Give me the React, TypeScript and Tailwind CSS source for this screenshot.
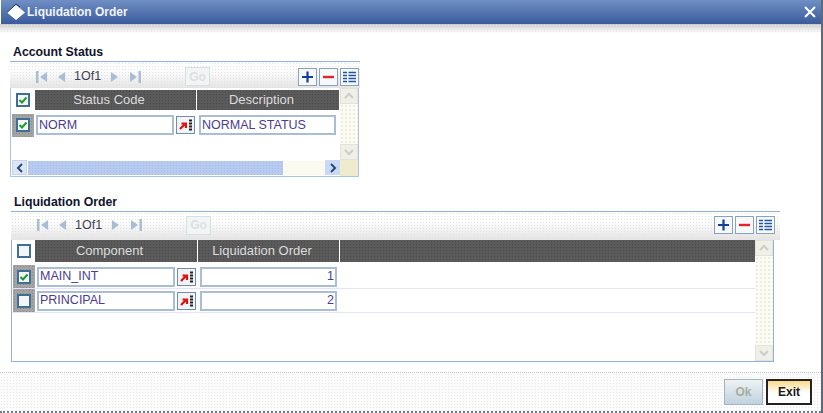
const dots =
  'bg-[radial-gradient(circle,#e6e6e2_1px,transparent_1px)] bg-[length:3px_3px]';

function Check({ checked }: { checked?: boolean }) {
  return (
    <div className="w-[14px] h-[14px] border-2 border-[#3f6f94] bg-[#f4f6f6] flex items-center justify-center">
      {checked && (
        <svg width="10" height="10" viewBox="0 0 10 10" fill="none">
          <path d="M1.5 5 L4 7.5 L8.5 2.5" stroke="#1f9a2c" strokeWidth="2" />
        </svg>
      )}
    </div>
  );
}

function Field({ w, right, children }: { w: string; right?: boolean; children: string }) {
  return (
    <div
      className={`${w} h-[20px] shrink-0 border-2 border-[#a9bdd5] bg-white flex items-center px-[1px] text-[12.5px] text-[#4a3d8f] ${
        right ? 'justify-end' : ''
      }`}
    >
      {children}
    </div>
  );
}

function Lookup() {
  return (
    <div className="w-[19px] h-[18px] shrink-0 border border-[#6f8db0] bg-[#f2f4f6] flex items-center justify-center">
      <svg width="15" height="12" viewBox="0 0 15 12">
        <path d="M2 10 L6.5 5.5 M3.5 4.5 H8 V9" stroke="#e01010" strokeWidth="2.2" fill="none" />
        <path d="M11 1.5 H14 M11 4.5 H14 M11 7.5 H14 M11 10.5 H14" stroke="#222" strokeWidth="2" />
      </svg>
    </div>
  );
}

function Tool({ kind }: { kind: 'plus' | 'minus' | 'list' }) {
  return (
    <div className="w-[19px] h-[18px] border border-[#8aa3bd] bg-[#f7f8f9] flex items-center justify-center">
      <svg width="15" height="14" viewBox="0 0 15 14" fill="none">
        {kind === 'plus' && <path d="M7.5 1.5 V12.5 M2 7 H13" stroke="#123f9c" strokeWidth="2.2" />}
        {kind === 'minus' && <path d="M2 7 H13" stroke="#e2222c" strokeWidth="2.4" />}
        {kind === 'list' && (
          <path
            d="M1 2.5 H5 M6.5 2.5 H14 M1 5.5 H5 M6.5 5.5 H14 M1 8.5 H5 M6.5 8.5 H14 M1 11.5 H5 M6.5 11.5 H14"
            stroke="#2353a8"
            strokeWidth="1.6"
          />
        )}
      </svg>
    </div>
  );
}

function Pager() {
  return (
    <div className="flex items-center text-[#a9bed6]">
      <svg width="11" height="12" viewBox="0 0 11 12" className="ml-[26px]">
        <path d="M0 0 H2.5 V12 H0 Z M11 1 V11 L4 6 Z" fill="currentColor" />
      </svg>
      <svg width="7" height="12" viewBox="0 0 7 12" className="ml-[11px]">
        <path d="M7 1 V11 L0 6 Z" fill="currentColor" />
      </svg>
      <span className="ml-[9px] w-[28px] text-[12.5px] text-[#3c3f55]">1Of1</span>
      <svg width="7" height="12" viewBox="0 0 7 12" className="ml-[9px]">
        <path d="M0 1 V11 L7 6 Z" fill="currentColor" />
      </svg>
      <svg width="11" height="12" viewBox="0 0 11 12" className="ml-[12px]">
        <path d="M0 1 V11 L7 6 Z M8.5 0 H11 V12 H8.5 Z" fill="currentColor" />
      </svg>
      <div className="ml-[44px] w-[25px] h-[19px] border border-[#d5dfe6] bg-[#f3f5f5] flex items-center justify-center text-[12px] font-bold text-[#dbe1e3]">
        Go
      </div>
    </div>
  );
}

function Arrow({ dir }: { dir: 'up' | 'down' | 'left' | 'right' }) {
  const d = {
    up: 'M2 8 L6 4 L10 8',
    down: 'M2 4 L6 8 L10 4',
    left: 'M8 2 L4 6 L8 10',
    right: 'M4 2 L8 6 L4 10',
  }[dir];
  const muted = dir === 'up' || dir === 'down';
  return (
    <svg width="12" height="12" viewBox="0 0 12 12" fill="none">
      <path d={d} stroke={muted ? '#c9cfc9' : '#234a78'} strokeWidth="2" />
    </svg>
  );
}

function VScroll({ corner }: { corner?: boolean }) {
  return (
    <div className="w-[18px] self-stretch flex flex-col bg-[#fdfcf4] bg-[radial-gradient(circle,#eeecdd_1px,transparent_1px)] bg-[length:4px_4px]">
      <div className="h-[16px] bg-[#f0f0e8] border border-[#e2e2d6] flex items-center justify-center">
        <Arrow dir="up" />
      </div>
      <div className="mt-auto h-[16px] bg-[#f0f0e8] border border-[#e2e2d6] flex items-center justify-center">
        <Arrow dir="down" />
      </div>
      {corner && <div className="h-[16px] bg-[#eeebce]" />}
    </div>
  );
}

function Section({
  title,
  sectionClass,
  children,
}: {
  title: string;
  sectionClass: string;
  children: React.ReactNode;
}) {
  return (
    <div className={sectionClass}>
      <div className="h-[18px] pl-[3px] text-[12.3px] leading-[18px] font-bold text-[#10142e]">{title}</div>
      <div className="border-t border-[#8fb2e0]" />
      {children}
    </div>
  );
}

function Toolbar({ size }: { size: string }) {
  return (
    <div
      className={`flex items-center justify-between ${size} bg-[radial-gradient(circle,#e2e2e2_1px,transparent_1px),linear-gradient(to_bottom,#ffffff_30%,#e4e4e4)] bg-[length:3px_3px,100%_100%]`}
    >
      <Pager />
      <div className="flex gap-[2px]">
        <Tool kind="plus" />
        <Tool kind="minus" />
        <Tool kind="list" />
      </div>
    </div>
  );
}

function Head({ w, children }: { w: string; children?: string }) {
  return (
    <div
      className={`${w} shrink-0 h-full pr-[13px] bg-[#5a5a5a] bg-[radial-gradient(circle,#4a4a4a_1px,transparent_1px)] bg-[length:3px_3px] flex items-center justify-center text-[13px] font-medium text-[#dcdcdc]`}
    >
      {children}
    </div>
  );
}

function Row({
  checked,
  first,
  second,
  right,
  line,
}: {
  checked?: boolean;
  first: string;
  second: string;
  right?: boolean;
  line?: boolean;
}) {
  return (
    <div className={`flex items-center h-[24px] ${line ? 'border-b border-[#e3e3fa]' : ''}`}>
      <div className="w-[22px] ml-[1px] h-[23px] shrink-0 flex items-center justify-center bg-[#a3a3a3] bg-[radial-gradient(circle,#8c8c8c_1px,transparent_1px)] bg-[length:3px_3px]">
        <Check checked={checked} />
      </div>
      <div className="ml-[2px]">
        <Field w="w-[138px]">{first}</Field>
      </div>
      <div className="ml-[2px]">
        <Lookup />
      </div>
      <div className="ml-[4px]">
        <Field w="w-[137px]" right={right}>
          {second}
        </Field>
      </div>
    </div>
  );
}

export default function App() {
  return (
    <div className="w-[823px] h-[413px] flex flex-col bg-white overflow-hidden border-r-2 border-[#5d6b78] font-['Liberation_Sans',Arial,sans-serif]">
      <div className="h-[24px] shrink-0 ml-[1px] flex items-center justify-between bg-[linear-gradient(to_bottom,#6f8fc4,#3a5a9c)]">
        <div className="flex items-center">
          <svg width="20" height="18" viewBox="0 0 20 18" className="ml-[5px]">
            <path d="M10 2 L19 9.5 L10 17 L1 9.5 Z" fill="#fff" />
            <path d="M1 9.5 L10 1 L14 4" stroke="#23406f" strokeWidth="1" fill="none" />
          </svg>
          <span className="ml-[1px] text-[12px] font-bold text-[#f1f4fb]">Liquidation Order</span>
        </div>
        <svg width="12" height="12" viewBox="0 0 12 12" className="mr-[5px]">
          <path d="M1 1 L11 11 M11 1 L1 11" stroke="#fff" strokeWidth="2" />
        </svg>
      </div>
      <div className="h-[9px] shrink-0 bg-[radial-gradient(circle,#e8e8e8_1px,transparent_1px),linear-gradient(to_bottom,#c9c9c9,#ffffff)] bg-[length:3px_3px,100%_100%]" />

      <Section title="Account Status" sectionClass="mt-[10px] ml-[10px] w-[350px]">
        <Toolbar size="h-[26px] pt-[3px] pr-[1px]" />
        <div className="w-[349px] h-[89px] flex border-l border-b border-r border-[#a9c4ea]">
          <div className="flex-1 flex flex-col min-w-0">
            <div className="flex h-[20px] mt-[2px]">
              <div className="w-[24px] shrink-0 flex items-center justify-center">
                <Check checked />
              </div>
              <Head w="w-[161px] mr-[1px]">Status Code</Head>
              <Head w="w-[142px]">Description</Head>
            </div>
            <div className="mt-[3px]">
              <Row checked first="NORM" second="NORMAL STATUS" />
            </div>
            <div className="mt-auto mb-[1px] h-[15px] flex items-center">
              <div className="w-[15px] h-[15px] ml-[1px] flex items-center justify-center bg-[#dce6f7] border border-[#c4d3ee]">
                <Arrow dir="left" />
              </div>
              <div className="ml-[1px] w-[255px] h-[14px] bg-[#b7cbf1] bg-[radial-gradient(circle,#a5bce8_1px,transparent_1px)] bg-[length:3px_3px]" />
              <div className="flex-1 h-[14px] bg-[#fbfaf0]" />
              <div className="w-[15px] h-[15px] flex items-center justify-center bg-[#c9d9f5]">
                <Arrow dir="right" />
              </div>
            </div>
          </div>
          <VScroll corner />
        </div>
      </Section>

      <Section title="Liquidation Order" sectionClass="mt-[16px] ml-[11px] w-[769px]">
        <Toolbar size="h-[28px] pt-[3px] pb-[5px] pr-[5px]" />
        <div className="w-[763px] h-[122px] flex border-l border-b border-r border-[#8fb2e0]">
          <div className="flex-1 flex flex-col min-w-0">
            <div className="flex h-[22px]">
              <div className="w-[23px] shrink-0 flex items-center justify-center">
                <Check />
              </div>
              <Head w="w-[162px] mr-[1px]">Component</Head>
              <Head w="w-[141px] mr-[1px]">Liquidation Order</Head>
              <Head w="flex-1" />
            </div>
            <div className="mt-[3px]">
              <Row checked first="MAIN_INT" second="1" right line />
              <Row first="PRINCIPAL" second="2" right line />
            </div>
          </div>
          <VScroll />
        </div>
      </Section>

      <div
        className={`mt-auto h-[41px] shrink-0 flex items-center justify-end gap-[3px] pr-[9px] border-t border-dotted border-[#b9c6d2] border-b-2 border-b-[#6d7c8a] bg-[#fcfcfc] ${dots}`}
      >
        <div className="w-[39px] h-[26px] border border-[#9fb3c4] bg-[linear-gradient(to_bottom,#eef2f4,#c0d2de)] flex items-center justify-center text-[12px] font-bold text-[#a9aca0]">
          Ok
        </div>
        <div className="w-[46px] h-[26px] border-2 border-[#222] bg-[linear-gradient(to_bottom,#fbd98b,#ffffff_55%)] flex items-center justify-center text-[12px] font-bold text-[#1a1a1a]">
          Exit
        </div>
      </div>
    </div>
  );
}
